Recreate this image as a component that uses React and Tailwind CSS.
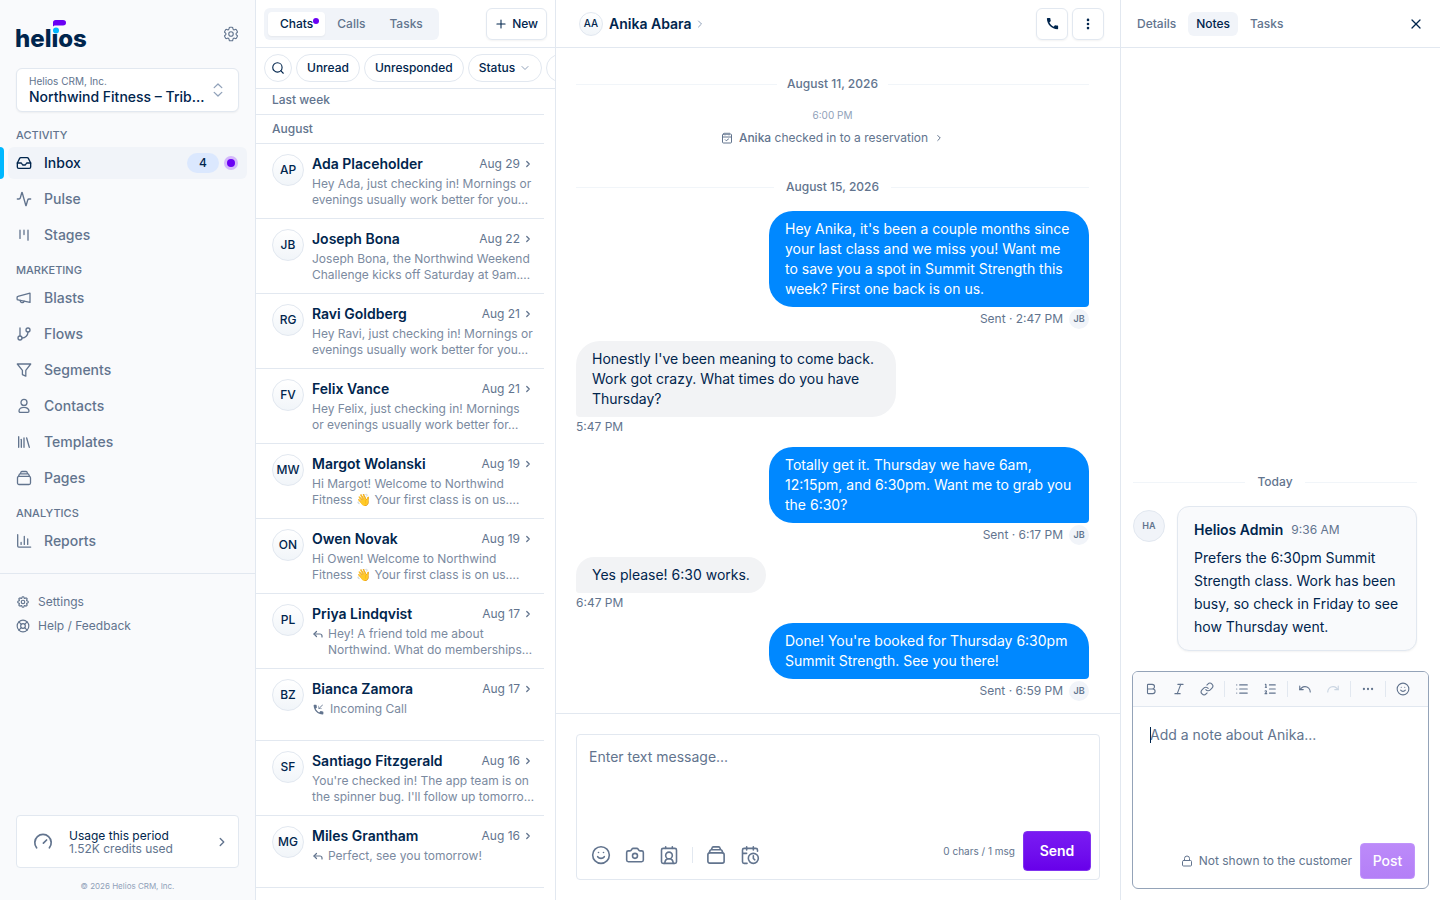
import React from "react";
import {
  Activity, Bold, Camera, ChevronDown, ChevronRight, Ellipsis, EllipsisVertical, GitBranch,
  Inbox, Italic, Library, LifeBuoy, Link, List, ListOrdered, Lock, Plus, Redo, Reply, Search, Smile, Undo, X,
} from "lucide-react";
import { HiOutlineCog6Tooth, HiOutlineCog8Tooth } from "react-icons/hi2";
import { MdCall, MdPhoneCallback } from "react-icons/md";

function Icon({ size = 16, box = 16, width = 1.2, children, className = "" }) {
  return (
    <svg width={size} height={size} viewBox={`0 0 ${box} ${box}`} fill="none" stroke="currentColor" strokeWidth={width} strokeLinecap="round" strokeLinejoin="round" className={className} aria-hidden="true">
      {children}
    </svg>
  );
}

const StagesIcon = () => (
  <Icon width={1.3}><path d="M4 3.2v8.2M8 3.2v4.4M12 3.2v10" /></Icon>
);
const BlastsIcon = () => (
  <Icon width={1.3}>
    <path d="M14 3.2v9.2L2 9.9a1 1 0 0 1-.9-1V7.4a1 1 0 0 1 .8-1z" />
    <path d="M4.2 10.4a2 2 0 0 0 3.900.8" />
  </Icon>
);
const FunnelIcon = () => (
  <Icon width={1.3}><path d="M1.300 2h13.400L9.800 8.300v5.900l-3.400-1.600V8.300z" /></Icon>
);
const PersonIcon = () => (
  <Icon width={1.3}>
    <circle cx="8" cy="4.400" r="3" />
    <path d="M3 12.900a5 3.600 0 0 1 10 0c0 .9-.5 1.400-1.300 1.400H4.300c-.8 0-1.300-.5-1.300-1.400z" />
  </Icon>
);
const StackIcon = ({ size = 16, width = 1.3 }) => (
  <Icon size={size} width={width}>
    <rect x="1.500" y="6.300" width="13" height="8.200" rx="1.500" />
    <path d="M2.600 6.200l.6-1.700a1 1 0 0 1 .9-.7h7.800a1 1 0 0 1 .9.7l.6 1.700M4.400 3.600l.4-1.200a1.200 1.200 0 0 1 1.100-.9h4.200a1.200 1.200 0 0 1 1.100.9l.4 1.200" />
  </Icon>
);
const ChartIcon = () => (
  <Icon width={1.3}><path d="M1.700 1.700v11.400a1 1 0 0 0 1 1h12M5.100 9.300v2.100M8.300 3.500v7.900M11.700 5.900v5.500" /></Icon>
);
const GaugeIcon = () => (
  <Icon size={20} box={20} width={1.7}>
    <path d="M3.600 15.800a8.200 8.200 0 1 1 12.800 0M10.400 11.200l3.200-3.200" />
  </Icon>
);
const SelectorIcon = () => (
  <Icon size={16} width={1.300}><path d="M4.200 5.600L8 2l3.800 3.600M4.200 10.400L8 14l3.800-3.600" /></Icon>
);
const CalendarCheckIcon = () => (
  <Icon size={12} box={24} width={2}>
    <rect x="3" y="4" width="18" height="18" rx="2" />
    <path d="M3 10h18M8 2v4M16 2v4M12 2v3M8.500 15.500l2 2 4.500-3.500" />
  </Icon>
);
const ContactCardIcon = () => (
  <Icon size={20} box={24} width={1.900}>
    <rect x="3" y="4" width="18" height="18" rx="2" />
    <path d="M8 2v2M16 2v2M7 22c0-3.500 2-5.500 5-5.500s5 2 5 5.500" />
    <circle cx="12" cy="12.500" r="4" />
  </Icon>
);
const CalendarClockIcon = () => (
  <Icon size={20} box={24} width={1.900}>
    <path d="M21 7.500V6a2 2 0 0 0-2-2H5a2 2 0 0 0-2 2v14a2 2 0 0 0 2 2h3.500M3 10h5M8 2v4M16 2v4M16 13v3.200l1.800 1.600" />
    <circle cx="16" cy="16" r="6" />
  </Icon>
);

function Logo() {
  return (
    <svg width="80" height="32" viewBox="0 0 80 32" className="overflow-visible" role="img" aria-label="helios">
      <text x="-1" y="29" fontFamily="Inter, sans-serif" fontWeight="800" fontSize="24" fill="#00254d">helios</text>
      <rect x="36" y="8" width="8" height="7" fill="#f9fafc" />
      <circle cx="40" cy="12.500" r="3" fill="#00b8ff" />
      <path d="M37 8.500V4.700A2.700 2.700 0 0 1 39.700 2h7.300c2 0 3 1 3 2.800S49 7.500 47 7.500H38.500z" fill="#6a00f4" />
    </svg>
  );
}

const NAV = [
  ["Activity", [["Inbox", <Inbox size={16} strokeWidth={2} />], ["Pulse", <Activity size={16} strokeWidth={2} />], ["Stages", <StagesIcon />]]],
  ["Marketing", [
    ["Blasts", <BlastsIcon />],
    ["Flows", <GitBranch size={16} strokeWidth={2} />],
    ["Segments", <FunnelIcon />],
    ["Contacts", <PersonIcon />],
    ["Templates", <Library size={16} strokeWidth={2} />],
    ["Pages", <StackIcon />],
  ]],
  ["Analytics", [["Reports", <ChartIcon />]]],
];

function NavItem({ label, icon }) {
  const active = label === "Inbox";
  return (
    <li className="relative px-2">
      {active && <span className="absolute left-0 top-0 h-8 w-1 rounded-r bg-[#00b8ff]" />}
      <a href="#" aria-current={active ? "page" : undefined} className={`flex h-8 items-center gap-3 rounded-md pr-[9px] pl-2 text-sm font-medium ${active ? "bg-[#f1f4f9] text-[#00254d]" : "text-slate-500"}`}>
        {icon}
        <span>{label}</span>
        {active && (
          <span className="ml-auto flex items-center gap-[5px]">
            <span className="flex h-5 w-8 items-center justify-center rounded-full bg-[#dbe8fe] text-xs">4</span>
            <span className="flex size-3.5 items-center justify-center rounded-full bg-[#d3b8fb]"><span className="size-2 rounded-full bg-[#6a00f4]" /></span>
          </span>
        )}
      </a>
    </li>
  );
}

function Sidebar() {
  return (
    <aside className="flex w-64 shrink-0 flex-col border-r border-slate-200 bg-[#f9fafc]">
      <div className="flex h-[68px] items-center justify-between pr-[15px] pl-4">
        <a href="#" aria-label="Home"><Logo /></a>
        <button aria-label="Account settings" className="text-slate-500"><HiOutlineCog6Tooth size={18} /></button>
      </div>
      <button className="mx-4 flex h-11 items-center justify-between rounded-md border border-slate-200 bg-white px-3 text-left shadow-xs">
        <span className="flex flex-col pt-0.5">
          <span className="text-[10px] leading-3 text-slate-500">Helios CRM, Inc.</span>
          <span className="whitespace-nowrap text-sm leading-5 font-medium text-[#00254d]">Northwind Fitness – Trib…</span>
        </span>
        <span className="text-slate-400"><SelectorIcon /></span>
      </button>
      <nav className="mt-1">
        {NAV.map(([title, items]) => (
          <section key={title} className="pt-[11px]">
            <h2 className="mb-1 px-4 text-[11px] leading-4 font-medium text-slate-500 uppercase">{title}</h2>
            <ul className="flex flex-col gap-1">
              {items.map(([label, icon]) => <NavItem key={label} label={label} icon={icon} />)}
            </ul>
          </section>
        ))}
      </nav>
      <div className="mt-4 flex flex-col gap-1 border-t border-slate-200 px-4 pt-[18px] text-xs text-slate-500">
        <a href="#" className="flex h-5 items-center gap-2"><HiOutlineCog8Tooth size={14} strokeWidth={2} />Settings</a>
        <a href="#" className="flex h-5 items-center gap-2"><LifeBuoy size={14} strokeWidth={2} />Help / Feedback</a>
      </div>
      <button className="mx-4 mt-auto flex h-[53px] items-center rounded border border-slate-200 bg-white px-4 text-left text-xs leading-[13px] text-slate-500">
        <GaugeIcon />
        <span className="ml-4 flex flex-col"><span className="text-[#00254d]">Usage this period</span><span>1.52K credits used</span></span>
        <ChevronRight size={14} strokeWidth={2.400} className="-mr-[7px] ml-auto" />
      </button>
      <p className="pt-3.5 pb-2.5 text-center text-[8px] leading-[8px] text-slate-400">© 2026 Helios CRM, Inc.</p>
    </aside>
  );
}

const CHATS = [
  ["AP", "Ada Placeholder", "Aug 29", ["Hey Ada, just checking in! Mornings or", "evenings usually work better for you…"]],
  ["JB", "Joseph Bona", "Aug 22", ["Joseph Bona, the Northwind Weekend", "Challenge kicks off Saturday at 9am.…"]],
  ["RG", "Ravi Goldberg", "Aug 21", ["Hey Ravi, just checking in! Mornings or", "evenings usually work better for you…"]],
  ["FV", "Felix Vance", "Aug 21", ["Hey Felix, just checking in! Mornings", "or evenings usually work better for…"]],
  ["MW", "Margot Wolanski", "Aug 19", ["Hi Margot! Welcome to Northwind", "Fitness 👋 Your first class is on us.…"]],
  ["ON", "Owen Novak", "Aug 19", ["Hi Owen! Welcome to Northwind", "Fitness 👋 Your first class is on us.…"]],
  ["PL", "Priya Lindqvist", "Aug 17", ["Hey! A friend told me about", "Northwind. What do memberships…"], "reply"],
  ["BZ", "Bianca Zamora", "Aug 17", ["Incoming Call"], "call"],
  ["SF", "Santiago Fitzgerald", "Aug 16", ["You're checked in! The app team is on", "the spinner bug. I'll follow up tomorro…"]],
  ["MG", "Miles Grantham", "Aug 16", ["Perfect, see you tomorrow!"], "reply"],
];

function ChatRow({ chat: [initials, name, date, lines, kind] }) {
  return (
    <li className="border-b border-slate-200">
      <a href="#" className="flex min-h-[71px] gap-2 py-2.5 pr-2 pl-4">
        <span className="flex size-8 shrink-0 items-center justify-center rounded-full border border-slate-200 bg-linear-to-b from-white to-slate-100 text-xs font-medium text-[#00254d]">{initials}</span>
        <span className="flex min-w-0 flex-1 flex-col gap-0.5">
          <span className="flex h-5 items-center">
            <span className="text-sm font-semibold text-[#00254d]">{name}</span>
            <span className="ml-auto text-xs text-slate-500">{date}</span>
            <ChevronRight size={10} strokeWidth={3} className="mr-[3px] ml-[3px] text-slate-500" />
          </span>
          <span className={`flex text-xs leading-4 whitespace-nowrap text-[#7b8aa0] ${kind === "call" ? "gap-[5px]" : "gap-1"}`}>
            {kind === "reply" && <Reply size={12} strokeWidth={2.400} className="mt-0.5 shrink-0 text-slate-500" />}
            {kind === "call" && <MdPhoneCallback size={13} className="mt-0.5 shrink-0 text-slate-500" />}
            <span>{lines.map((l) => <span key={l} className="block">{l}</span>)}</span>
          </span>
        </span>
      </a>
    </li>
  );
}

const CHIP = "flex h-7 shrink-0 items-center rounded-full border border-slate-200 bg-white px-2.5 text-xs font-medium text-[#00254d]";

function ChatList() {
  return (
    <section className="flex w-[300px] shrink-0 flex-col overflow-hidden border-r border-slate-200 bg-white">
      <header className="flex h-12 shrink-0 items-center justify-between border-b border-slate-200 px-2">
        <div role="tablist" className="flex h-8 items-center rounded-md bg-[#f1f4f9] p-1 text-xs font-medium text-slate-500">
          <button role="tab" aria-selected="true" className="relative h-6 rounded bg-white px-3 text-[#00254d] shadow-xs">
            Chats<span className="absolute top-1.5 right-1.5 size-1.5 rounded-full bg-[#6a00f4]" />
          </button>
          <button role="tab" className="h-6 px-3">Calls</button>
          <button role="tab" className="h-6 px-3">Tasks</button>
        </div>
        <button className="flex h-8 items-center gap-1 rounded-md border border-slate-200 pr-2 pl-[7px] text-xs font-medium text-[#00254d] shadow-xs"><Plus size={14} strokeWidth={1.8} />New</button>
      </header>
      <div className="flex h-[41px] shrink-0 items-center gap-1 overflow-hidden border-b border-slate-200 pl-2">
        <button aria-label="Search" className="flex size-7 shrink-0 items-center justify-center rounded-full border border-slate-200 text-[#00254d]"><Search size={14} strokeWidth={1.9} /></button>
        <button className={CHIP}>Unread</button>
        <button className={CHIP}>Unresponded</button>
        <button className={CHIP}>Status<ChevronDown size={12} strokeWidth={2} className="ml-1 text-slate-400" /></button>
        <button aria-label="More filters" className={CHIP}><span className="w-12" /></button>
      </div>
      <div className="min-h-0 flex-1 overflow-hidden pr-[11px]">
        <h3 className="h-[26px] border-b border-slate-200 px-4 pt-[3px] text-xs leading-4 font-medium text-slate-500">Last week</h3>
        <h3 className="flex h-[29px] items-center border-b border-slate-200 px-4 text-xs font-medium text-slate-500">August</h3>
        <ul>{CHATS.map((c) => <ChatRow key={c[1]} chat={c} />)}</ul>
      </div>
    </section>
  );
}

function DateDivider({ children, gap = "gap-3" }) {
  return (
    <div className={`flex items-center text-xs leading-4 font-medium text-slate-500 ${gap}`}>
      <span className="h-px flex-1 bg-slate-100" />{children}<span className="h-px flex-1 bg-slate-100" />
    </div>
  );
}

function Sent({ time, children }) {
  return (
    <div className="mb-3 flex flex-col items-end">
      <p className="w-80 rounded-3xl rounded-br bg-[#0088ff] px-4 py-2 text-sm leading-5 text-white">{children}</p>
      <div className="mt-0.5 flex h-5 items-center gap-1.5 text-xs text-slate-500">
        Sent · {time}
        <span className="flex size-5 items-center justify-center rounded-full bg-[#f1f4f9] text-[9px] font-semibold">JB</span>
      </div>
    </div>
  );
}

function Received({ time, children }) {
  return (
    <div className="mb-2.5 flex flex-col items-start">
      <p className="max-w-80 rounded-3xl rounded-bl bg-[#f2f3f5] px-4 py-2 text-sm leading-5 text-[#00254d]">{children}</p>
      <span className="text-xs leading-5 text-slate-500">{time}</span>
    </div>
  );
}

const HEAD_BUTTON = "flex size-8 items-center justify-center rounded-md border border-slate-200 text-[#00254d] shadow-xs";

function Conversation() {
  return (
    <main className="flex min-w-0 flex-1 flex-col border-r border-slate-200 bg-white">
      <header className="flex h-12 shrink-0 items-center border-b border-slate-200 pr-4 pl-[23px]">
        <span className="flex size-6 items-center justify-center rounded-full border border-slate-200 bg-linear-to-b from-white to-slate-100 text-[10px] font-medium text-[#00254d]">AA</span>
        <h1 className="ml-1.5 text-sm font-semibold text-[#00254d]">Anika Abara</h1>
        <ChevronRight size={12} strokeWidth={2} className="ml-0.5 text-slate-400" />
        <div className="ml-auto flex gap-1">
          <button aria-label="Call" className={HEAD_BUTTON}><MdCall size={15} /></button>
          <button aria-label="More" className={HEAD_BUTTON}><EllipsisVertical size={14} strokeWidth={2.500} /></button>
        </div>
      </header>
      <div className="flex min-h-0 flex-1 flex-col overflow-hidden pt-7 pr-[31px] pl-5">
        <DateDivider gap="gap-2.5">August 11, 2026</DateDivider>
        <time className="mt-[15px] text-center text-[10px] leading-4 text-slate-400">6:00 PM</time>
        <a href="#" className="mt-[7px] flex items-center justify-center gap-1.5 text-xs leading-4 text-slate-500">
          <CalendarCheckIcon /><span><span className="font-medium">Anika</span> checked in to a reservation</span><ChevronRight size={10} strokeWidth={2.400} />
        </a>
        <div className="mt-[33px] mb-4"><DateDivider>August 15, 2026</DateDivider></div>
        <Sent time="2:47 PM">Hey Anika, it's been a couple months since your last class and we miss you! Want me to save you a spot in Summit Strength this week? First one back is on us.</Sent>
        <Received time="5:47 PM">Honestly I've been meaning to come back. Work got crazy. What times do you have Thursday?</Received>
        <Sent time="6:17 PM">Totally get it. Thursday we have 6am, 12:15pm, and 6:30pm. Want me to grab you the 6:30?</Sent>
        <Received time="6:47 PM">Yes please! 6:30 works.</Received>
        <Sent time="6:59 PM">Done! You're booked for Thursday 6:30pm Summit Strength. See you there!</Sent>
      </div>
      <footer className="shrink-0 border-t border-slate-200 p-5">
        <div className="flex h-[146px] flex-col rounded border border-slate-200 pr-2 pb-2 pl-3">
          <textarea aria-label="Text message" placeholder="Enter text message..." className="min-h-0 flex-1 resize-none pt-3 text-sm leading-5 text-[#00254d] outline-none placeholder:text-slate-500" />
          <div className="flex items-center text-slate-500">
            <div className="mt-2 ml-0.5 flex items-center gap-3.5">
              <button aria-label="Emoji"><Smile size={20} strokeWidth={1.900} /></button>
              <button aria-label="Photo"><Camera size={20} strokeWidth={1.900} /></button>
              <button aria-label="Contact card"><ContactCardIcon /></button>
              <span className="-mx-px h-4 w-px bg-slate-200" />
              <button aria-label="Templates"><StackIcon size={20} /></button>
              <button aria-label="Schedule"><CalendarClockIcon /></button>
            </div>
            <span className="ml-auto text-[10px]">0 chars / 1 msg</span>
            <button className="ml-2 h-10 w-[68px] rounded border border-[#8133ef] bg-linear-to-b from-[#7a1af2] to-[#6800ea] text-sm font-semibold text-white">Send</button>
          </div>
        </div>
      </footer>
    </main>
  );
}

function Tool({ label, icon: I, size = 14, className = "" }) {
  return <button aria-label={label} className={`flex size-7 items-center justify-center ${className}`}><I size={size} strokeWidth={1.900} /></button>;
}
const Sep = () => <span className="mx-[3px] h-4 w-px bg-slate-200" />;

function NotesPanel() {
  return (
    <aside className="flex w-[319px] shrink-0 flex-col bg-white">
      <header className="flex h-12 shrink-0 items-center border-b border-slate-200 pr-4 pl-2 text-xs font-medium text-slate-500">
        <div role="tablist" className="flex gap-1">
          <button role="tab" className="h-6 px-2">Details</button>
          <button role="tab" aria-selected="true" className="h-6 rounded-md bg-[#f1f4f9] px-2 text-[#00254d]">Notes</button>
          <button role="tab" className="h-6 px-2">Tasks</button>
        </div>
        <button aria-label="Close" className="ml-auto text-[#00254d]"><X size={16} strokeWidth={1.900} /></button>
      </header>
      <div className="flex min-h-0 flex-1 flex-col justify-end pr-[23px] pl-3">
        <DateDivider>Today</DateDivider>
        <article className="mt-4 mb-5 flex items-start gap-3">
          <span className="mt-1 flex size-8 shrink-0 items-center justify-center rounded-full border border-slate-200 bg-[#f1f4f9] text-[9px] font-semibold text-slate-500">HA</span>
          <div className="flex-1 rounded-xl border border-slate-200 bg-[#f9fafc] px-4 py-3 text-sm text-[#00254d] shadow-xs">
            <div className="flex h-[22px] items-center gap-2"><h2 className="font-semibold">Helios Admin</h2><time className="text-xs text-slate-500">9:36 AM</time></div>
            <p className="mt-[5px] leading-[23px]">Prefers the 6:30pm Summit Strength class. Work has been busy, so check in Friday to see how Thursday went.</p>
          </div>
        </article>
      </div>
      <div className="mr-[11px] mb-[11px] ml-[11px] flex h-[218px] shrink-0 flex-col overflow-hidden rounded-md border border-[#94a3b8]">
        <div className="flex h-[35px] shrink-0 items-center border-b border-slate-200 bg-[#f9fafc] px-1 text-slate-500">
          <Tool label="Bold" icon={Bold} /><Tool label="Italic" icon={Italic} /><Tool label="Link" icon={Link} />
          <Sep />
          <Tool label="Bulleted list" icon={List} /><Tool label="Numbered list" icon={ListOrdered} />
          <Sep />
          <Tool label="Undo" icon={Undo} /><Tool label="Redo" icon={Redo} className="text-slate-300" />
          <Sep />
          <Tool label="More" icon={Ellipsis} />
          <Sep />
          <Tool label="Emoji" icon={Smile} />
        </div>
        <div className="relative flex min-h-0 flex-1">
          <textarea aria-label="Note" placeholder="Add a note about Anika..." className="flex-1 resize-none px-[17px] py-[18px] text-sm leading-5 text-[#00254d] outline-none placeholder:text-slate-500" />
          <span className="absolute top-5 left-[17px] h-4 w-px bg-[#00254d]" />
        </div>
        <div className="flex items-center justify-end pr-[13px] pb-[9px] text-xs text-slate-500">
          <Lock size={12} /><span className="mr-2 ml-1.5">Not shown to the customer</span>
          <button disabled className="h-9 w-[55px] rounded border border-[#c094fb] bg-linear-to-b from-[#bc8af9] to-[#b47ff7] text-sm font-medium text-white">Post</button>
        </div>
      </div>
    </aside>
  );
}

export default function App() {
  return (
    <div className="flex h-screen overflow-hidden font-['Inter',sans-serif] antialiased">
      <Sidebar />
      <ChatList />
      <Conversation />
      <NotesPanel />
    </div>
  );
}
